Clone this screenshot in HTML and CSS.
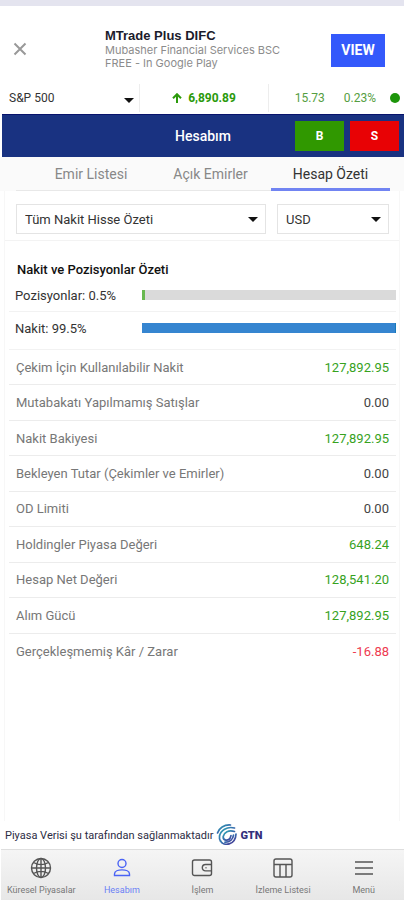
FILE: index.html
```html
<!DOCTYPE html>
<html lang="tr">
<head>
<meta charset="utf-8">
<meta name="viewport" content="width=device-width, initial-scale=1">
<title>Hesabım</title>
<link rel="stylesheet" href="styles.css">
</head>
<body>
<aside class="promo">
  <button class="promo-close" aria-label="Kapat"><svg width="14" height="14" viewBox="0 0 14 14"><path d="M1.500 1.500l11 11M12.500 1.500l-11 11"/></svg></button>
  <div class="promo-text">
    <strong>MTrade Plus DIFC</strong>
    <span>Mubasher Financial Services BSC</span>
    <span>FREE - In Google Play</span>
  </div>
  <a class="promo-view" href="#view">VIEW</a>
</aside>

<section class="ticker">
  <label class="picker ticker-index">
    <select aria-label="Endeks"><option>S&amp;P 500</option></select>
    <svg class="caret" width="10" height="5" viewBox="0 0 10 5"><path d="M0 0h10L5 5z"/></svg>
  </label>
  <div class="ticker-price"><svg width="10" height="10" viewBox="0 0 10 10"><path d="M5 10V1.500M1 5.200l4-4 4 4"/></svg><b>6,890.89</b></div>
  <div class="ticker-change"><span>15.73</span><span>0.23%</span><i class="dot"></i></div>
</section>

<header class="bar">
  <h1>Hesabım</h1>
  <div class="bar-actions"><button class="buy">B</button><button class="sell">S</button></div>
</header>

<nav class="tabs">
  <a href="#emir">Emir Listesi</a>
  <a href="#acik" class="middle">Açık Emirler</a>
  <a href="#ozet" class="active">Hesap Özeti</a>
</nav>

<main>
  <div class="filters">
    <label class="picker box">
      <select aria-label="Özet türü"><option>Tüm Nakit Hisse Özeti</option></select>
      <svg class="caret" width="10" height="5" viewBox="0 0 10 5"><path d="M0 0h10L5 5z"/></svg>
    </label>
    <label class="picker box">
      <select aria-label="Para birimi"><option>USD</option></select>
      <svg class="caret" width="10" height="5" viewBox="0 0 10 5"><path d="M0 0h10L5 5z"/></svg>
    </label>
  </div>

  <section class="summary">
    <h2>Nakit ve Pozisyonlar Özeti</h2>
    <div class="share"><span>Pozisyonlar: 0.5%</span><div class="track"><div class="fill green-fill" style="width:1%"></div></div></div>
    <div class="share cash"><span>Nakit: 99.5%</span><div class="track"><div class="fill blue-fill" style="width:99.5%"></div></div></div>
    <dl class="figures">
      <div><dt>Çekim İçin Kullanılabilir Nakit</dt><dd class="up">127,892.95</dd></div>
      <div><dt>Mutabakatı Yapılmamış Satışlar</dt><dd>0.00</dd></div>
      <div><dt>Nakit Bakiyesi</dt><dd class="up">127,892.95</dd></div>
      <div><dt>Bekleyen Tutar (Çekimler ve Emirler)</dt><dd>0.00</dd></div>
      <div><dt>OD Limiti</dt><dd>0.00</dd></div>
      <div><dt>Holdingler Piyasa Değeri</dt><dd class="up">648.24</dd></div>
      <div><dt>Hesap Net Değeri</dt><dd class="up">128,541.20</dd></div>
      <div><dt>Alım Gücü</dt><dd class="up">127,892.95</dd></div>
      <div><dt>Gerçekleşmemiş Kâr / Zarar</dt><dd class="down">-16.88</dd></div>
    </dl>
  </section>
</main>

<p class="provider">
  <span>Piyasa Verisi şu tarafından sağlanmaktadır</span>
  <svg width="21" height="22" viewBox="0 0 21 22">
    <defs><linearGradient id="swirl" x1="0" y1="0" x2="1" y2="1"><stop offset="0" stop-color="#2fb5b5"/><stop offset=".5" stop-color="#3569ad"/><stop offset="1" stop-color="#4a2c8c"/></linearGradient></defs>
    <g fill="none" stroke="url(#swirl)" stroke-width="1.700" stroke-linecap="round">
      <path d="M14.500 1C8 .5 3 4 1.500 9"/>
      <path d="M18.500 4C11 2 4.500 6.500 3.500 12c-.3 2 0 3.500 1 5"/>
      <path d="M18.500 7.500C12.500 5.500 8 8.500 7.200 12.500c-.5 4 5 5 7 1.500l.8-2.500"/>
      <path d="M4.500 17c3 5.500 15 4.500 15.500-7"/>
      <path d="M9 18.200c4.500.3 8-2.700 8.500-7"/>
    </g>
  </svg>
  <b>GTN</b>
</p>

<nav class="dock">
  <a href="#piyasa"><svg width="22" height="22" viewBox="0 0 22 22"><circle cx="11" cy="11" r="9.500"/><ellipse cx="11" cy="11" rx="4.500" ry="9.500"/><path d="M11 1.500v19M1.500 11h19M3.500 5.500c4.500 2.500 10.500 2.500 15 0M3.500 16.500c4.500-2.500 10.500-2.500 15 0"/></svg><span>Küresel Piyasalar</span></a>
  <a href="#hesabim" class="active"><svg width="22" height="22" viewBox="0 0 22 22"><circle cx="11" cy="6.500" r="4"/><path d="M3.500 18.500v-1.500c0-5.500 15-5.500 15 0v1.500z"/></svg><span>Hesabım</span></a>
  <a href="#islem"><svg width="22" height="22" viewBox="0 0 22 22"><rect x="1.500" y="3" width="19" height="15.500" rx="2"/><path d="M20.500 7.500H14.500a3.200 3.200 0 0 0 0 6.400h6M14.500 10.700h1"/></svg><span>İşlem</span></a>
  <a href="#izleme"><svg width="22" height="22" viewBox="0 0 22 22"><rect x="2" y="2" width="18" height="18" rx="2"/><path d="M2 7.500h18M8 7.500v12.500M14 7.500v12.500"/></svg><span>İzleme Listesi</span></a>
  <a href="#menu"><svg width="22" height="22" viewBox="0 0 22 22"><path d="M2 5h18M2 11h18M2 17h18"/></svg><span>Menü</span></a>
</nav>
</body>
</html>
```

FILE: styles.css
```css
* { box-sizing: border-box; }

body {
  margin: 0;
  min-height: 100vh;
  display: flex;
  flex-direction: column;
  border-top: 6px solid #e4e4ef;
  background: #fff;
  color: #333;
  font-family: Roboto, "Liberation Sans", sans-serif;
  font-size: 13px;
}

a { text-decoration: none; }
button { border: 0; padding: 0; cursor: pointer; font-family: inherit; }

/* Promo strip */
.promo {
  display: flex;
  align-items: center;
  height: 78px;
  padding: 8px 19px 0 13px;
}
.promo-close { width: 14px; height: 18px; background: none; }
.promo-close svg { display: block; fill: none; stroke: #999; stroke-width: 2; }
.promo-text {
  flex: 1;
  display: flex;
  flex-direction: column;
  margin-left: 78px;
  font-family: Inter, "Liberation Sans", sans-serif;
  font-size: 11px;
  line-height: 13px;
  color: #8c8c8c;
  white-space: nowrap;
}
.promo-text strong {
  font-family: "Liberation Sans", sans-serif;
  font-size: 13px;
  line-height: 16px;
  color: #1b1b2b;
}
.promo-view {
  width: 54px;
  line-height: 33px;
  margin-top: 2px;
  background: #3459fb;
  color: #fff;
  font-size: 14px;
  font-weight: 700;
  text-align: center;
}

/* Drop-downs */
.picker { position: relative; display: block; }
.picker select {
  appearance: none;
  width: 100%;
  height: 100%;
  border: 0;
  background: none;
  color: #333;
  font: inherit;
}
.caret { position: absolute; right: 7px; top: 50%; margin-top: -2px; fill: #111; pointer-events: none; }

/* Index ticker */
.ticker {
  display: grid;
  grid-template-columns: 139fr 130fr 135fr;
  height: 30px;
  padding-bottom: 2px;
}
.ticker > * { height: 28px; }
.ticker-index { font-size: 12px; }
.ticker-index select { padding: 0 20px 0 9px; }
.ticker-index .caret { right: 5px; margin-top: 0; }
.ticker-price {
  display: flex;
  align-items: center;
  justify-content: center;
  gap: 6px;
  border: solid #ededed;
  border-width: 0 1px;
  color: #2b9a0b;
  font-size: 12px;
}
.ticker-price svg { fill: none; stroke: #2b9a0b; stroke-width: 2; }
.ticker-change {
  display: flex;
  align-items: center;
  justify-content: flex-end;
  gap: 19px;
  padding-right: 4px;
  color: #559e42;
  font-size: 12px;
}
.dot { width: 10px; height: 10px; margin-left: -5px; border-radius: 50%; background: #1d950a; }

/* Page header */
.bar {
  display: grid;
  grid-template-columns: 1fr auto 1fr;
  align-items: center;
  height: 43px;
  margin-left: 2px;
  background: #193281;
  border-top: 1px solid #08136c;
  color: #fff;
}
.bar h1 { grid-column: 2; margin: 0; font-size: 14px; font-weight: 500; }
.bar-actions { display: flex; justify-content: flex-end; gap: 6px; padding-right: 5px; }
.bar-actions button { width: 49px; height: 30px; color: #fff; font-size: 12px; font-weight: 700; }
.buy { background: #309800; }
.sell { background: #e80205; }

/* Tabs */
.tabs {
  display: grid;
  grid-template-columns: 150fr 105fr 119fr;
  padding: 0 14px 0 16px;
  background: #fafafa;
}
.tabs a {
  border-bottom: 1px solid #e8e8e8;
  color: #888;
  font-size: 14px;
  line-height: 34px;
  height: 34px;
  text-align: center;
  white-space: nowrap;
}
.tabs .middle { padding-right: 16px; }
.tabs .active { border-bottom: 3px solid #7184f2; color: #333; }

/* Account summary */
main { flex: 1; margin: 0 4px; border: solid #f7f7f7; border-width: 0 1px; }
.filters {
  display: grid;
  grid-template-columns: 250fr 112fr;
  gap: 11px;
  padding: 13px 10px 6px 11px;
  border-bottom: 1px solid #f3f3f3;
}
.box { height: 30px; border: 1px solid #e4e4e4; background: #fff; }
.box select { padding: 0 20px 0 8px; }
.summary { padding: 20px 3px 0 4px; }
.summary h2 { margin: 0 0 0 8px; font-size: 13px; line-height: 18px; font-weight: 500; color: #111; }
.share {
  display: grid;
  grid-template-columns: 127px 1fr;
  align-items: center;
  height: 33px;
  padding-left: 6px;
  border-bottom: 1px solid #f2f2f2;
}
.cash { height: 38px; padding-bottom: 5px; }
.track { height: 10px; background: #dadada; }
.fill { height: 100%; }
.green-fill { background: #68b850; }
.blue-fill { background: #3585d0; }
.cash .track { background: #187aba; }

.figures { display: grid; grid-auto-rows: 1fr; min-height: 319px; margin: 0; }
.figures div {
  display: flex;
  align-items: center;
  justify-content: space-between;
  padding: 0 7px;
  border-bottom: 1px solid #ececec;
}
.figures div:last-child { border-bottom: 0; }
dt { color: #777; }
dd { margin: 0; color: #444; }
.up { color: #37a21e; }
.down { color: #ee3a50; }

/* Data provider */
.provider {
  display: flex;
  align-items: center;
  gap: 3px;
  height: 28px;
  margin: 0;
  padding-left: 5px;
  font-size: 11px;
  color: #2c2c44;
}
.provider b { color: #33307c; font-size: 11px; font-weight: 900; }

/* Bottom navigation */
.dock {
  display: grid;
  grid-template-columns: repeat(5, 1fr);
  height: 51px;
  margin-left: 1px;
  border-top: 1px solid #dedede;
  background: linear-gradient(#f5f5f5, #e7e7e7);
}
.dock a {
  display: flex;
  flex-direction: column;
  align-items: center;
  gap: 6px;
  padding-top: 7px;
  color: #777;
  font-size: 9px;
  line-height: 11px;
  white-space: nowrap;
}
.dock svg { fill: none; stroke: #555; stroke-width: 1.4; }
.dock .active { color: #6a80f5; }
.dock .active svg { stroke: #4a63f5; }
```
